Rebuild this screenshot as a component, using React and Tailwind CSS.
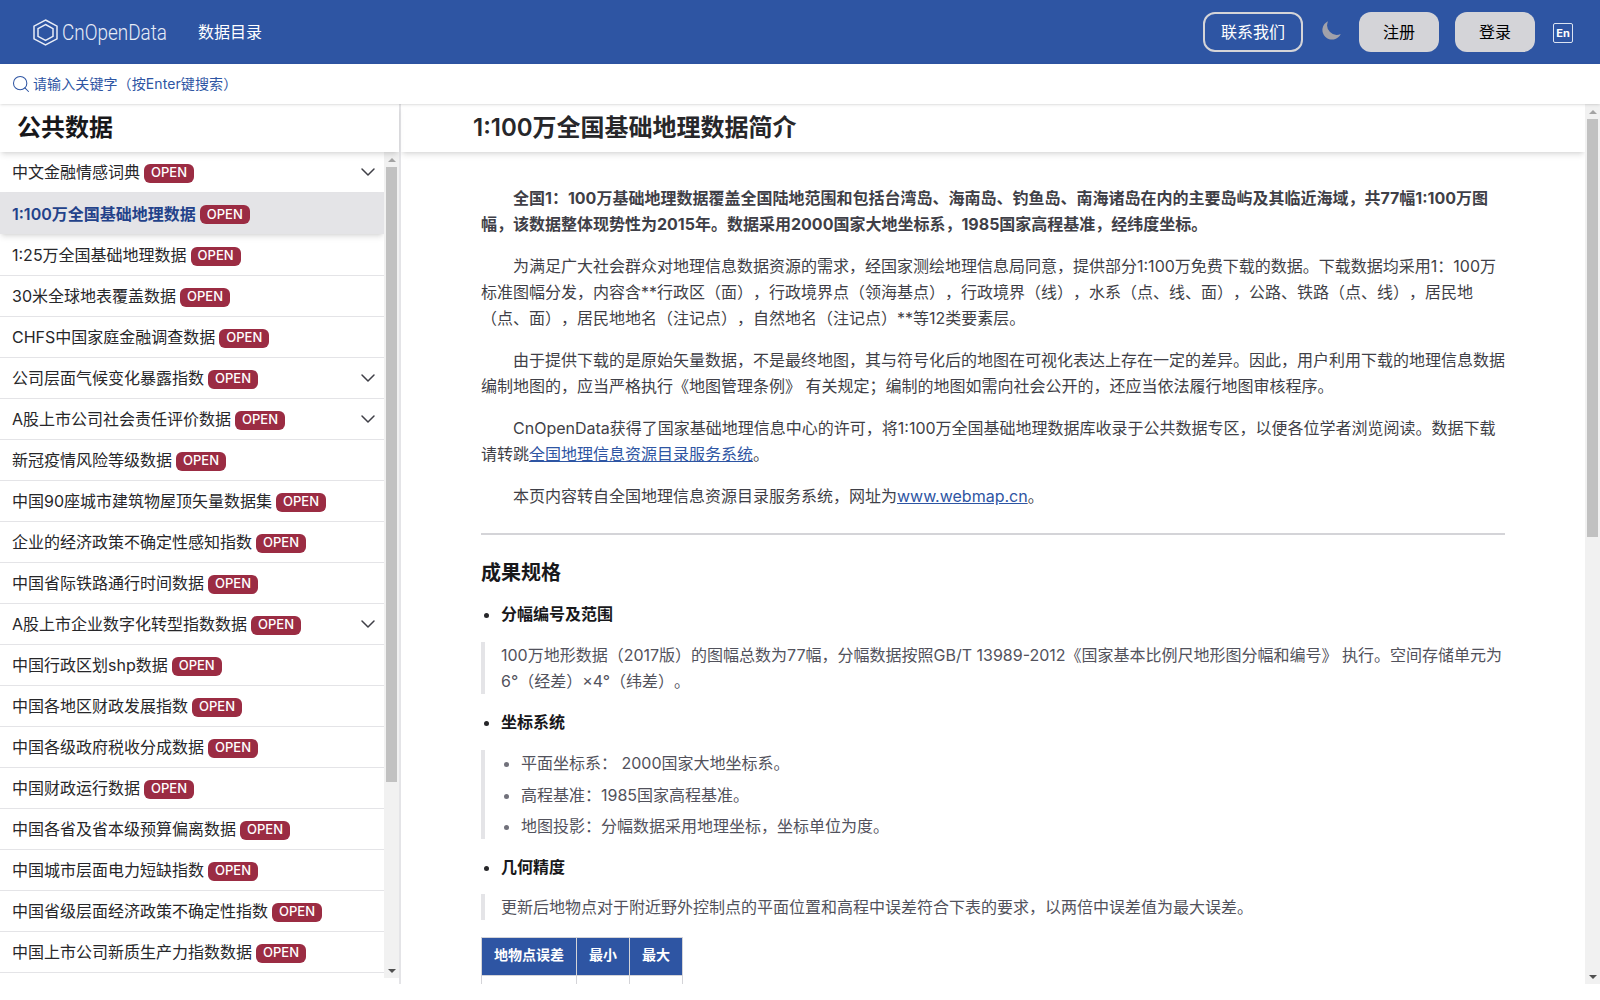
import React from "react";
import { ChevronDown, Search } from "lucide-react";

const items = [
  { name: "中文金融情感词典", more: true },
  { name: "1:100万全国基础地理数据", active: true },
  { name: "1:25万全国基础地理数据" },
  { name: "30米全球地表覆盖数据" },
  { name: "CHFS中国家庭金融调查数据" },
  { name: "公司层面气候变化暴露指数", more: true },
  { name: "A股上市公司社会责任评价数据", more: true },
  { name: "新冠疫情风险等级数据" },
  { name: "中国90座城市建筑物屋顶矢量数据集" },
  { name: "企业的经济政策不确定性感知指数" },
  { name: "中国省际铁路通行时间数据" },
  { name: "A股上市企业数字化转型指数数据", more: true },
  { name: "中国行政区划shp数据" },
  { name: "中国各地区财政发展指数" },
  { name: "中国各级政府税收分成数据" },
  { name: "中国财政运行数据" },
  { name: "中国各省及省本级预算偏离数据" },
  { name: "中国城市层面电力短缺指数" },
  { name: "中国省级层面经济政策不确定性指数" },
  { name: "中国上市公司新质生产力指数数据" },
];

function Logo() {
  return (
    <svg width="25" height="27" viewBox="0 0 25 27" fill="none" stroke="#e8ecf6" strokeWidth="1.5">
      <path d="M12.5 1 L24 7.2 V19.8 L12.5 26 L1 19.8 V7.2 Z" />
      <path d="M12.5 5.5 L20 9.7 V17.3 L12.5 21.5 L5 17.3 V9.7 Z" />
    </svg>
  );
}

function Moon() {
  return (
    <svg width="24" height="24" viewBox="0 0 20 20" fill="#a1a1aa">
      <path d="M17.293 13.293A8 8 0 016.707 2.707a8.001 8.001 0 1010.586 10.586z" />
    </svg>
  );
}

// the reference shows classic scrollbars, headless hides the native ones
function ScrollBar({ thumb }) {
  return (
    <div className="w-[15px] shrink-0 bg-[#f1f1f1] flex flex-col items-center">
      <div className="h-[15px] w-full flex items-center justify-center">
        <span className="border-x-[4px] border-x-transparent border-b-[4px] border-b-[#a3a3a3]" />
      </div>
      <div className={thumb}>
        <div className="h-full bg-[#c1c1c1]" />
      </div>
      <div className="flex-1" />
      <div className="h-[15px] w-full flex items-center justify-center">
        <span className="border-x-[4px] border-x-transparent border-t-[4px] border-t-[#505050]" />
      </div>
    </div>
  );
}

function Header() {
  return (
    <header className="h-16 shrink-0 bg-[#2e55a3] flex items-center justify-between pl-[33px] pr-[27px] text-white">
      <div className="flex items-center">
        <Logo />
        <span className="ml-[4px] w-[105px] whitespace-nowrap text-[22px] text-[#e8ecf6] font-['Roboto',sans-serif] font-light origin-left scale-x-[.86]">CnOpenData</span>
        <span className="ml-[31px] text-base">数据目录</span>
      </div>
      <div className="flex items-center">
        <button className="w-[100px] h-10 rounded-xl border-2 border-zinc-300 text-base">联系我们</button>
        <span className="ml-[17px] mb-1"><Moon /></span>
        <button className="ml-[15px] w-20 h-10 rounded-xl bg-zinc-300 text-black text-base">注册</button>
        <button className="ml-4 w-20 h-10 rounded-xl bg-zinc-300 text-black text-base">登录</button>
        <span className="ml-[18px] mt-[2px] w-5 h-5 rounded-[2px] border-[1.5px] border-[#dbe3f2] flex items-center justify-center text-[11px] font-bold leading-none">En</span>
      </div>
    </header>
  );
}

function Sidebar() {
  return (
    <aside className="w-[401px] h-[880px] shrink-0 border-r-2 border-zinc-200 flex flex-col">
      <h2 className="h-12 shrink-0 pl-[17px] flex items-center text-2xl font-semibold text-zinc-900 shadow-md relative z-10">公共数据</h2>
      <div className="h-[826px] flex">
        <ul className="flex-1 min-w-0 overflow-hidden">
          {items.map((it) => (
            <li
              key={it.name}
              className={
                it.active
                  ? "h-[41px] mb-px pl-3 pr-1 flex items-center justify-between bg-zinc-200 shadow-md relative"
                  : "h-[41px] pl-3 pr-1 flex items-center justify-between border-b border-zinc-200"
              }
            >
              <div className="flex items-center gap-1">
                <span className={it.active ? "text-base font-semibold text-[#23428a]" : "text-base text-zinc-800"}>{it.name}</span>
                <span className="h-[19px] w-[50px] mt-[2px] rounded-md bg-[#9b2c43] text-white text-[13px] font-medium flex items-center justify-center">OPEN</span>
              </div>
              {it.more && <ChevronDown size={24} strokeWidth={1.5} className="text-zinc-700" />}
            </li>
          ))}
        </ul>
        <ScrollBar thumb="w-full h-[615px] px-[2px]" />
      </div>
    </aside>
  );
}

function Quote({ className, children }) {
  return <blockquote className={"border-l-4 border-zinc-200 pl-4 text-zinc-600 " + className}>{children}</blockquote>;
}

function Content() {
  return (
    <div className="flex-1 min-w-0 h-[880px] flex">
      <main className="flex-1 min-w-0 overflow-hidden">
        <h1 className="h-12 pl-[72px] flex items-center text-2xl font-semibold text-zinc-800 shadow-md relative z-10">1:100万全国基础地理数据简介</h1>
        <article className="max-w-5xl mx-auto pt-[33px] text-base leading-[26px] text-zinc-700">
          <p className="indent-[2em] font-bold">全国1：100万基础地理数据覆盖全国陆地范围和包括台湾岛、海南岛、钓鱼岛、南海诸岛在内的主要岛屿及其临近海域，共77幅1:100万图幅，该数据整体现势性为2015年。数据采用2000国家大地坐标系，1985国家高程基准，经纬度坐标。</p>
          <p className="mt-4 indent-[2em]">为满足广大社会群众对地理信息数据资源的需求，经国家测绘地理信息局同意，提供部分1:100万免费下载的数据。下载数据均采用1：100万标准图幅分发，内容含**行政区（面），行政境界点（领海基点），行政境界（线），水系（点、线、面），公路、铁路（点、线），居民地（点、面），居民地地名（注记点），自然地名（注记点）**等12类要素层。</p>
          <p className="mt-4 indent-[2em]">由于提供下载的是原始矢量数据，不是最终地图，其与符号化后的地图在可视化表达上存在一定的差异。因此，用户利用下载的地理信息数据编制地图的，应当严格执行《地图管理条例》 有关规定；编制的地图如需向社会公开的，还应当依法履行地图审核程序。</p>
          <p className="mt-4 indent-[2em]">CnOpenData获得了国家基础地理信息中心的许可，将1:100万全国基础地理数据库收录于公共数据专区，以便各位学者浏览阅读。数据下载请转跳<a className="text-[#2e55a3] underline">全国地理信息资源目录服务系统</a>。</p>
          <p className="mt-4 indent-[2em]">本页内容转自全国地理信息资源目录服务系统，网址为<a className="text-[#2e55a3] underline">www.webmap.cn</a>。</p>
          <hr className="mt-[24px] border-t-2 border-zinc-300" />
          <h3 className="mt-6 text-xl leading-[28px] font-semibold text-zinc-900">成果规格</h3>
          <ul className="mt-[14px] list-disc pl-5 marker:text-zinc-800 font-bold text-zinc-900">
            <li>分幅编号及范围</li>
          </ul>
          <Quote className="mt-[15px]">100万地形数据（2017版）的图幅总数为77幅，分幅数据按照GB/T 13989-2012《国家基本比例尺地形图分幅和编号》 执行。空间存储单元为6°（经差）×4°（纬差）。</Quote>
          <ul className="mt-[15px] list-disc pl-5 marker:text-zinc-800 font-bold text-zinc-900">
            <li>坐标系统</li>
          </ul>
          <Quote className="mt-[15px]">
            <ul className="list-disc pl-5 marker:text-zinc-500 flex flex-col gap-[5.5px]">
              <li>平面坐标系： 2000国家大地坐标系。</li>
              <li>高程基准：1985国家高程基准。</li>
              <li>地图投影：分幅数据采用地理坐标，坐标单位为度。</li>
            </ul>
          </Quote>
          <ul className="mt-[15px] list-disc pl-5 marker:text-zinc-800 font-bold text-zinc-900">
            <li>几何精度</li>
          </ul>
          <Quote className="mt-[14px]">更新后地物点对于附近野外控制点的平面位置和高程中误差符合下表的要求，以两倍中误差值为最大误差。</Quote>
          <table className="mt-[17px] border-collapse text-sm">
            <thead>
              <tr className="h-[38px] bg-[#2e55a3] text-white">
                <th className="border border-zinc-300 px-3 pb-[3px]">地物点误差</th>
                <th className="border border-zinc-300 px-3 pb-[3px]">最小</th>
                <th className="border border-zinc-300 px-3 pb-[3px]">最大</th>
              </tr>
            </thead>
            <tbody>
              <tr className="h-[38px]">
                <td className="border border-zinc-300" />
                <td className="border border-zinc-300" />
                <td className="border border-zinc-300" />
              </tr>
            </tbody>
          </table>
        </article>
      </main>
      <ScrollBar thumb="w-full h-[418px] px-[2px]" />
    </div>
  );
}

export default function App() {
  return (
    <div className="h-screen flex flex-col overflow-hidden bg-white font-['Inter','Noto_Sans_CJK_SC',sans-serif] [text-spacing-trim:space-all]">
      <Header />
      <div className="h-10 shrink-0 pl-[11px] pb-px flex items-center gap-[2px] text-[#2e55a3] text-sm shadow-sm relative z-20 bg-white">
        <Search size={20} strokeWidth={1.25} />
        <span className="tracking-[0.1px]">请输入关键字（按Enter键搜索）</span>
      </div>
      <div className="flex-1 flex min-h-0">
        <Sidebar />
        <Content />
      </div>
    </div>
  );
}
